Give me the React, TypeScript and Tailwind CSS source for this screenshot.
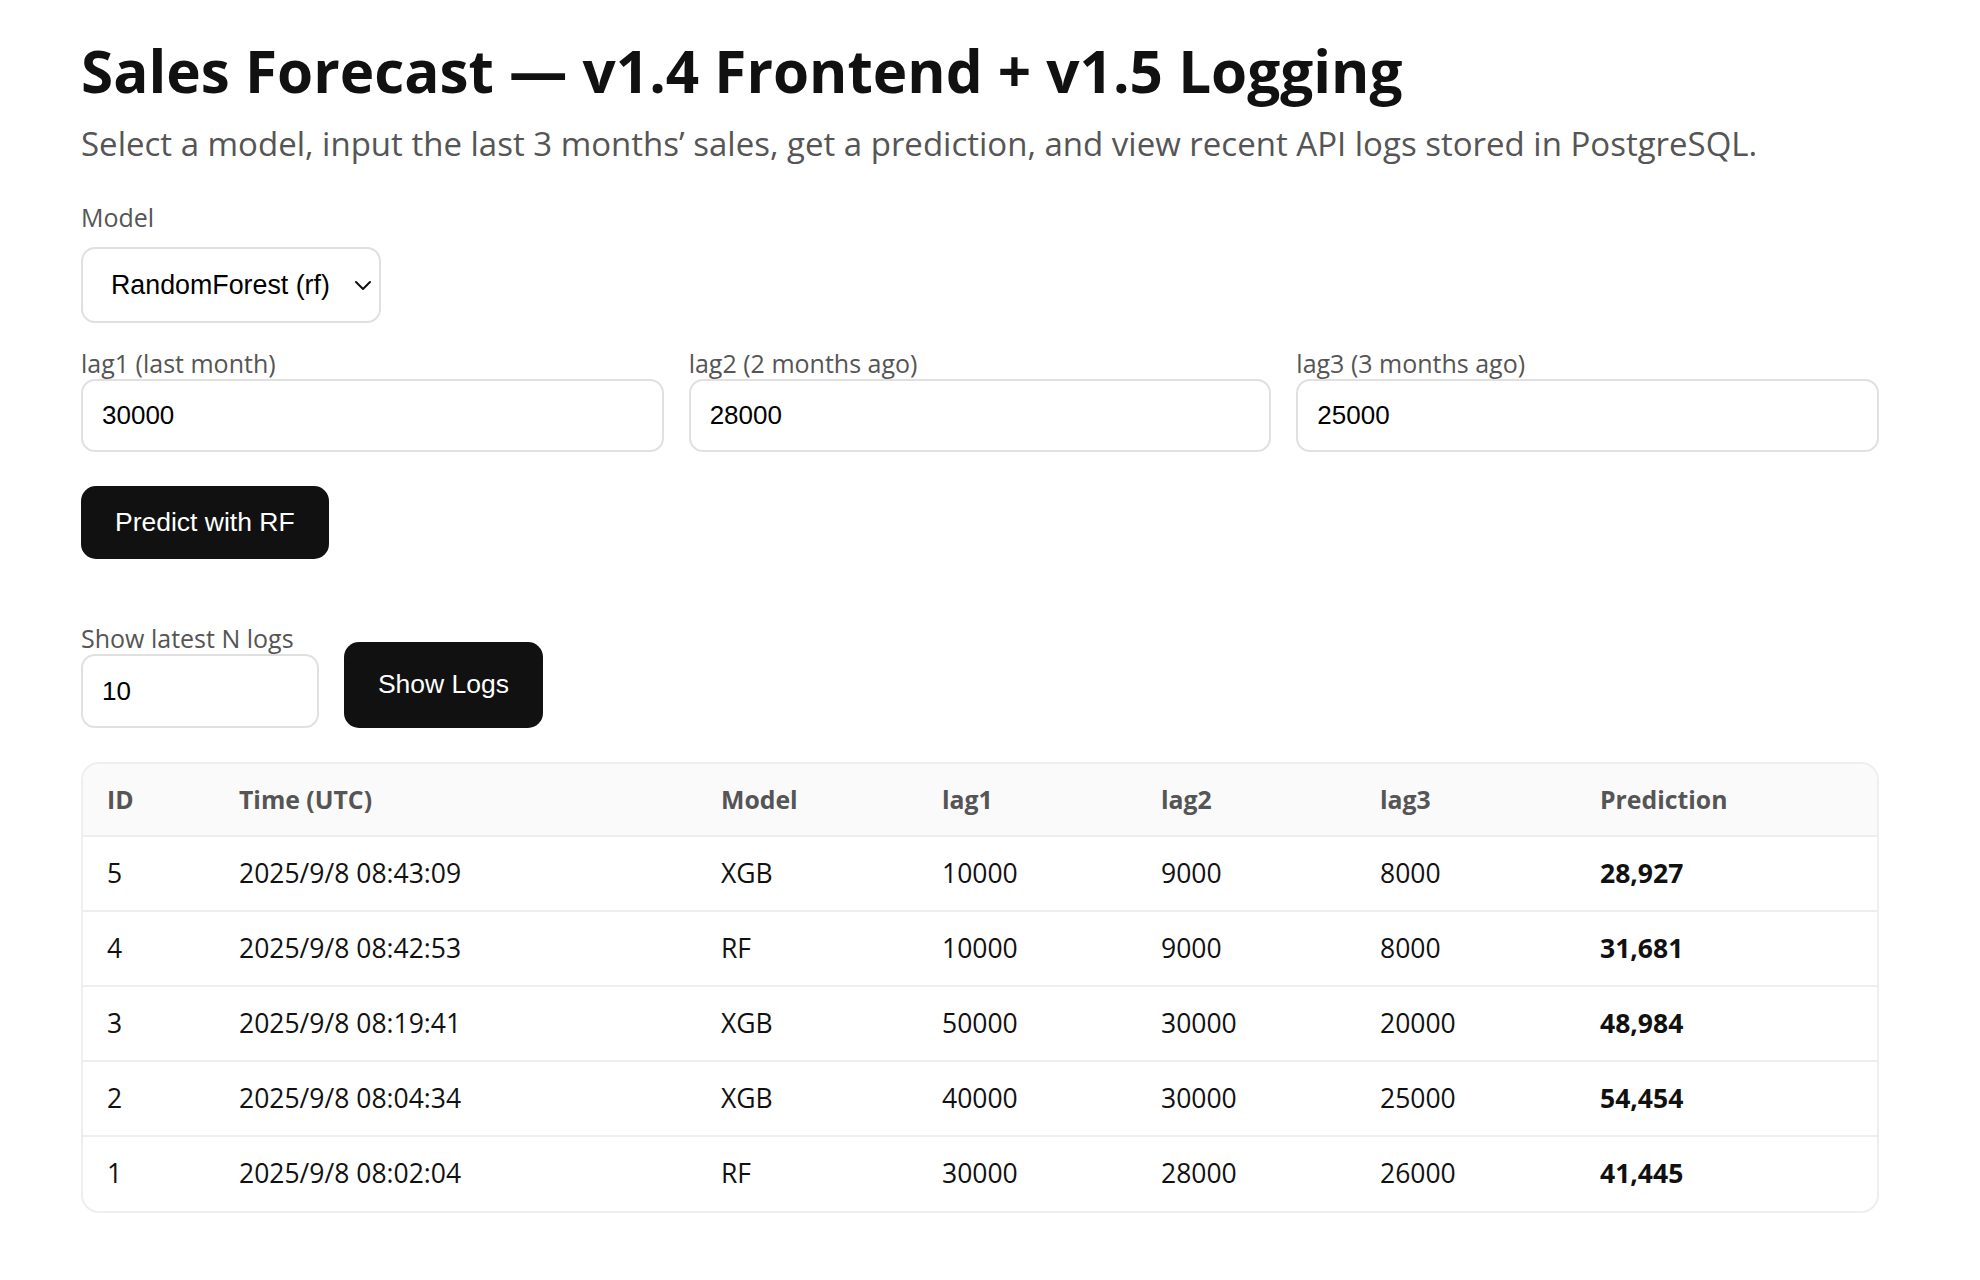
import React from "react";

type LogRow = {
  id: number;
  time: string;
  model: string;
  lag1: number;
  lag2: number;
  lag3: number;
  prediction: string;
};

const logs: LogRow[] = [
  { id: 5, time: "2025/9/8 08:43:09", model: "XGB", lag1: 10000, lag2: 9000, lag3: 8000, prediction: "28,927" },
  { id: 4, time: "2025/9/8 08:42:53", model: "RF", lag1: 10000, lag2: 9000, lag3: 8000, prediction: "31,681" },
  { id: 3, time: "2025/9/8 08:19:41", model: "XGB", lag1: 50000, lag2: 30000, lag3: 20000, prediction: "48,984" },
  { id: 2, time: "2025/9/8 08:04:34", model: "XGB", lag1: 40000, lag2: 30000, lag3: 25000, prediction: "54,454" },
  { id: 1, time: "2025/9/8 08:02:04", model: "RF", lag1: 30000, lag2: 28000, lag3: 26000, prediction: "41,445" },
];

const lagFields = [
  { label: "lag1 (last month)", value: "30000" },
  { label: "lag2 (2 months ago)", value: "28000" },
  { label: "lag3 (3 months ago)", value: "25000" },
];

export default function App() {
  return (
    <div className="min-h-screen bg-white font-['Open_Sans',sans-serif] text-[#111]">
      <div className="ml-[81px] w-[1798px] pt-[36px]">
        {/* Header */}
        <h1 className="text-[58.4px] font-bold leading-[70px] text-[#111]">
          Sales Forecast — v1.4 Frontend + v1.5 Logging
        </h1>
        <p className="mt-[16px] text-[33px] leading-[44px] text-[#555]">
          Select a model, input the last 3 months’ sales, get a prediction, and view recent API logs stored in PostgreSQL.
        </p>

        {/* Model select */}
        <label className="mt-[36px] block text-[25px] leading-[30px] text-[#555]">Model</label>
        <div className="relative mt-[15px] w-[300px]">
          <select
            defaultValue="rf"
            className="h-[76px] w-[300px] appearance-none rounded-[14px] border-2 border-[#e0e0e0] bg-white pl-[28px] pr-[40px] font-['Liberation_Sans',Arial,sans-serif] text-[26.8px] text-black outline-none"
          >
            <option value="rf">RandomForest (rf)</option>
            <option value="xgb">XGBoost (xgb)</option>
          </select>
          <svg
            className="pointer-events-none absolute right-[8px] top-[28px]"
            width="20"
            height="20"
            viewBox="0 0 20 20"
            fill="none"
          >
            <path d="M3 7l7 7 7-7" stroke="#111" strokeWidth="2" strokeLinecap="round" strokeLinejoin="round" />
          </svg>
        </div>

        {/* Lag inputs */}
        <div className="mt-[25px] grid grid-cols-3 gap-x-[25px]">
          {lagFields.map((f) => (
            <div key={f.label}>
              <label className="block text-[25px] leading-[30px] text-[#555]">{f.label}</label>
              <input
                defaultValue={f.value}
                className="mt-[1px] h-[73px] w-full rounded-[14px] border-2 border-[#e0e0e0] bg-white px-[19px] font-['Liberation_Sans',Arial,sans-serif] text-[26px] text-black outline-none"
              />
            </div>
          ))}
        </div>

        <button className="mt-[34px] h-[73px] rounded-[15px] bg-[#111] px-[34px] font-['Liberation_Sans',Arial,sans-serif] text-[26.5px] text-white">
          Predict with RF
        </button>

        {/* Logs controls */}
        <div className="mt-[64px] flex items-end gap-[25px]">
          <div>
            <label className="block text-[25px] leading-[30px] text-[#555]">Show latest N logs</label>
            <input
              defaultValue="10"
              className="mt-[1px] h-[74px] w-[238px] rounded-[14px] border-2 border-[#e0e0e0] bg-white px-[19px] font-['Liberation_Sans',Arial,sans-serif] text-[26px] text-black outline-none"
            />
          </div>
          <button className="h-[86px] w-[199px] rounded-[15px] bg-[#111] font-['Liberation_Sans',Arial,sans-serif] text-[26.5px] text-white">
            Show Logs
          </button>
        </div>

        {/* Logs table */}
        <div className="mt-[34px] overflow-hidden rounded-[18px] border-2 border-[#eeeeee]">
          <table className="w-full table-fixed border-collapse text-left">
            <thead>
              <tr className="h-[72px] bg-[#fafafa] text-[24.8px] font-bold text-[#555]">
                <th className="w-[132px] pl-[24px] font-bold">ID</th>
                <th className="w-[482px] pl-[24px] font-bold">Time (UTC)</th>
                <th className="w-[221px] pl-[24px] font-bold">Model</th>
                <th className="w-[219px] pl-[24px] font-bold">lag1</th>
                <th className="w-[219px] pl-[24px] font-bold">lag2</th>
                <th className="w-[220px] pl-[24px] font-bold">lag3</th>
                <th className="pl-[24px] font-bold">Prediction</th>
              </tr>
            </thead>
            <tbody className="text-[26.5px] text-[#111]">
              {logs.map((r) => (
                <tr key={r.id} className="h-[75px] border-t-2 border-[#eeeeee]">
                  <td className="pl-[24px]">{r.id}</td>
                  <td className="pl-[24px]">{r.time}</td>
                  <td className="pl-[24px]">{r.model}</td>
                  <td className="pl-[24px]">{r.lag1}</td>
                  <td className="pl-[24px]">{r.lag2}</td>
                  <td className="pl-[24px]">{r.lag3}</td>
                  <td className="pl-[24px] font-bold">{r.prediction}</td>
                </tr>
              ))}
            </tbody>
          </table>
        </div>
      </div>
    </div>
  );
}
